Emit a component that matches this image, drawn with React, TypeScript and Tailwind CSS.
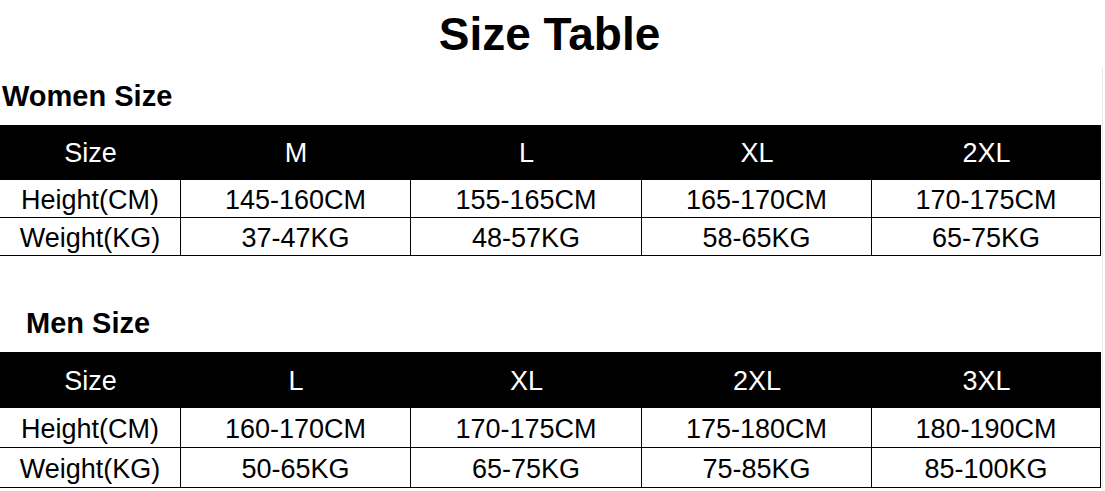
const font = { fontFamily: '"Liberation Sans", Arial, sans-serif' }

type Table = {
  sizes: string[]
  height: string[]
  weight: string[]
}

const women: Table = {
  sizes: ['M', 'L', 'XL', '2XL'],
  height: ['145-160CM', '155-165CM', '165-170CM', '170-175CM'],
  weight: ['37-47KG', '48-57KG', '58-65KG', '65-75KG'],
}

const men: Table = {
  sizes: ['L', 'XL', '2XL', '3XL'],
  height: ['160-170CM', '170-175CM', '175-180CM', '180-190CM'],
  weight: ['50-65KG', '65-75KG', '75-85KG', '85-100KG'],
}

const cols = 'grid grid-cols-[181px_230px_231px_230px_229px] w-[1101px]'

function SizeGrid({ data, headerH, rowH }: { data: Table; headerH: string; rowH: string }) {
  return (
    <div>
      <div className={`${cols} bg-black text-white ${headerH}`}>
        {['Size', ...data.sizes].map((s, i) => (
          <div key={i} className="flex items-center justify-center pt-[2px] text-[27px] leading-none">
            {s}
          </div>
        ))}
      </div>
      {[
        ['Height(CM)', ...data.height],
        ['Weight(KG)', ...data.weight],
      ].map((row, r) => (
        <div key={r} className={`${cols} ${rowH} overflow-hidden border-b border-black`}>
          {row.map((cell, i) => (
            <div
              key={i}
              className="flex items-center justify-center border-r border-black pt-[4px] text-[27px] leading-none text-black"
            >
              {cell}
            </div>
          ))}
        </div>
      ))}
    </div>
  )
}

export default function App() {
  return (
    <div className="relative h-[491px] w-[1105px] overflow-hidden bg-white" style={font}>
      <div className="absolute right-[2px] top-[68px] bottom-0 w-px bg-[#e6e6e6]" />
      <div className="h-[68px] pr-[6px] text-center text-[46px] font-bold leading-[68px] text-black">
        Size Table
      </div>
      <div className="h-[57px] pl-[2px] text-[29px] font-bold leading-[57px] text-black">
        Women Size
      </div>
      <SizeGrid data={women} headerH="h-[55px]" rowH="h-[38px]" />
      <div className="mt-[39px] h-[57px] pl-[26px] text-[29px] font-bold leading-[57px] text-black">
        Men Size
      </div>
      <SizeGrid data={men} headerH="h-[56px]" rowH="h-[40px]" />
    </div>
  )
}
